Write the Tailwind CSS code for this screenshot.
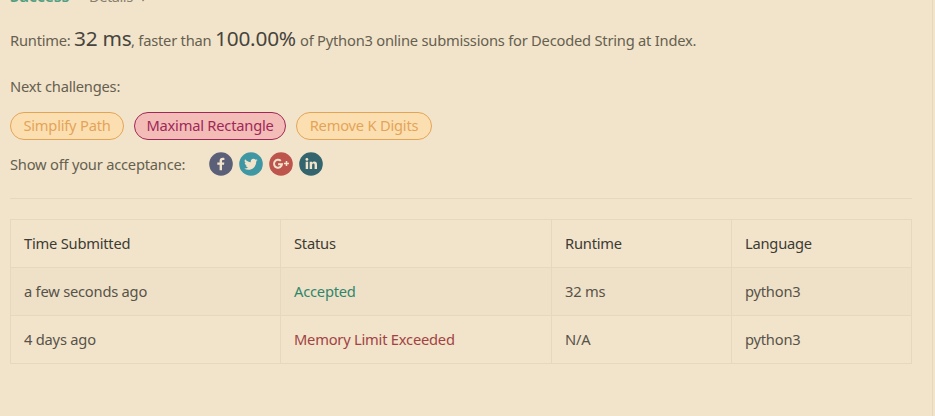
<!DOCTYPE html>
<html lang="en">
<head>
<meta charset="utf-8">
<title>Submission result</title>
<script src="https://cdn.jsdelivr.net/npm/@tailwindcss/browser@4"></script>
</head>
<body class="h-[416px] overflow-hidden bg-[#f2e4cb] font-['Noto_Sans',sans-serif] text-[14.7px] leading-[20px] tracking-[-0.22px] text-[#65604f]">
<main class="flex h-[416px] w-[933px] flex-col border-r border-[#e5d8bf] pr-[20px] pl-[10px] whitespace-nowrap">
  <div class="-mt-[14px] flex h-[20px] shrink-0 items-center">
    <span class="w-[79px] text-[16.2px] font-semibold text-[#519e82]">Success</span>
    <span class="w-[52px] tracking-[-0.5px] text-[#88806f]">Details</span>
    <svg class="mt-[4px] h-[8px] w-[7px]" viewBox="0 0 7 8" fill="none" stroke="#88806f" stroke-width="1.3"><path d="M1.500 1l3 3-3 3"/></svg>
  </div>
  <p class="mt-[18px] flex h-[28px] shrink-0 items-baseline leading-[28px]">
    <span class="w-[64px]">Runtime:</span>
    <span class="w-[57px] text-[20.800px] tracking-[-0.2px] text-[#46443d]">32 ms</span>
    <span class="w-[84px]">, faster than</span>
    <span class="w-[85px] text-[20.800px] tracking-[-0.2px] text-[#46443d]">100.00%</span>
    <span>of Python3 online submissions for Decoded String at Index.</span>
  </p>
  <p class="mt-[24px] shrink-0">Next challenges:</p>
  <div class="mt-[16px] flex h-[28px] shrink-0 gap-[10px] leading-[24px]">
    <a class="w-[114px] rounded-full border border-[#e4a458] bg-[#fcdfb1] text-center text-[#e4a458]">Simplify Path</a>
    <a class="w-[152px] rounded-full border border-[#9f2858] bg-[#f3bcb7] text-center text-[#9f2858]">Maximal Rectangle</a>
    <a class="w-[136px] rounded-full border border-[#e4a458] bg-[#fcdfb1] text-center text-[#e4a458]">Remove K Digits</a>
  </div>
  <div class="mt-[12px] flex h-[24px] shrink-0 items-center">
    <span class="w-[199px]">Show off your acceptance:</span>
    <div class="flex gap-[6px]">
      <svg class="size-[24px]" viewBox="0 0 24 24"><circle cx="12" cy="12" r="11.8" fill="#5b5f78"/><path fill="#f2e4cb" d="M10.6 18.3v-5.5H8.3v-2.3h2.3V8.8c0-2 1.2-3.1 3-3.1.8 0 1.5.1 1.8.2v2h-1.2c-.9 0-1.2.5-1.2 1.2v1.4h2.3l-.3 2.3h-2v5.5z"/></svg>
      <svg class="size-[24px]" viewBox="0 0 24 24"><circle cx="12" cy="12" r="11.8" fill="#3f97a4"/><path fill="#f2e4cb" transform="translate(5.4 5.500) scale(.56)" d="M23.6 4.6c-.9.4-1.8.6-2.8.8 1-.6 1.8-1.6 2.2-2.7-1 .6-2 1-3.1 1.2a4.9 4.9 0 0 0-8.4 4.5C7.4 8.200 3.800 6.200 1.300 3.200a4.900 4.900 0 0 0 1.500 6.600c-.8 0-1.600-.2-2.200-.6v.1c0 2.300 1.700 4.300 3.900 4.800-.7.2-1.500.2-2.200.1.600 2 2.400 3.400 4.600 3.400A9.900 9.900 0 0 1-.4 19.600a13.900 13.900 0 0 0 7.500 2.200c9.100 0 14-7.500 14-14v-.6c1-.7 1.800-1.600 2.500-2.600z"/></svg>
      <svg class="size-[24px]" viewBox="0 0 24 24"><circle cx="12" cy="12" r="11.8" fill="#bd554d"/><path fill="none" stroke="#f2e4cb" stroke-width="2" d="M11.8 8.900A4 4 0 1 0 13 12.200H9.100"/><path fill="none" stroke="#f2e4cb" stroke-width="1.5" d="M17.500 9.100v5M15 11.600h5"/></svg>
      <svg class="size-[24px]" viewBox="0 0 24 24"><circle cx="12" cy="12" r="11.800" fill="#34656e"/><circle cx="7.900" cy="7.400" r="1.400" fill="#f2e4cb"/><path fill="#f2e4cb" d="M6.700 9.700h2.400v7.300H6.700zM10.700 9.700H13v1c.5-.8 1.300-1.200 2.300-1.200 1.900 0 2.700 1.200 2.700 3.200v4.300h-2.400v-4c0-.9-.3-1.500-1.100-1.500-.9 0-1.400.6-1.400 1.500v4h-2.400z"/></svg>
    </div>
  </div>
  <hr class="mt-[22px] w-[902px] border-t border-[#e5d8bf]">
  <table class="mt-[20px] w-[902px] table-fixed border-collapse text-left text-[#57534a] [&_td]:h-[48px] [&_td]:border [&_td]:border-[#e5d8bf] [&_td]:px-[13px] [&_td]:pt-0 [&_td]:pb-[2px] [&_th]:h-[48px] [&_th]:border [&_th]:border-[#e5d8bf] [&_th]:px-[13px] [&_th]:pt-0 [&_th]:pb-[2px] [&_th]:font-normal">
    <colgroup><col class="w-[270px]"><col class="w-[271px]"><col class="w-[180px]"><col class="w-[180px]"></colgroup>
    <thead class="text-[#3c3b34]"><tr><th>Time Submitted</th><th>Status</th><th>Runtime</th><th>Language</th></tr></thead>
    <tbody>
      <tr class="bg-[#efe1c7]"><td>a few seconds ago</td><td class="text-[#30866c]">Accepted</td><td>32 ms</td><td>python3</td></tr>
      <tr><td>4 days ago</td><td class="text-[#a14343]">Memory Limit Exceeded</td><td>N/A</td><td>python3</td></tr>
    </tbody>
  </table>
</main>
</body>
</html>
